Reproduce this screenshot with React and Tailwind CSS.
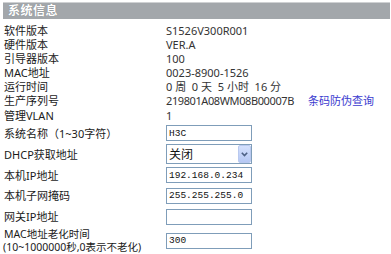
import React from 'react';

const info = [
  { label: '软件版本', value: 'S1526V300R001', h: 'h-[14px]' },
  { label: '硬件版本', value: 'VER.A', h: 'h-[14px]' },
  { label: '引导器版本', value: '100', h: 'h-[14px]' },
  { label: 'MAC地址', value: '0023-8900-1526', h: 'h-[14px]' },
  { label: '运行时间', value: '0 周  0 天  5 小时  16 分', h: 'h-[14px]' },
];

function TextBox({ value }) {
  return (
    <input
      type="text"
      defaultValue={value}
      className="w-[86px] h-[16px] border border-[#7f9db9] bg-white px-[2px] text-[9.5px] text-[#111] outline-none font-['Liberation_Mono','Noto_Sans_CJK_SC',monospace]"
    />
  );
}

function Row({ label, h, children }) {
  return (
    <div className={`flex items-center ${h}`}>
      <div className="w-[166px] shrink-0 pl-[4px] text-[#1a1a1a]">{label}</div>
      <div className="flex items-center text-[#333]">{children}</div>
    </div>
  );
}

export default function App() {
  return (
    <div className="w-[391px] h-[254px] bg-white overflow-hidden text-[11px] leading-none font-['Noto_Sans','Noto_Sans_CJK_SC',sans-serif]">
      <div className="ml-[3px] mt-[2px] w-[387px] h-[17px] bg-[#a3a7ab] border-t border-[#cfd1d3] flex items-center pl-[5px]">
        <span className="text-white font-bold text-[12px] tracking-[0.5px] [text-shadow:0_0_1px_#7d8185]">系统信息</span>
      </div>

      <div className="pt-[4px]">
        {info.map((r) => (
          <Row key={r.label} label={r.label} h={r.h}>
            <span className="whitespace-pre">{r.value}</span>
          </Row>
        ))}
        <Row label="生产序列号" h="h-[15px]">
          <span className="w-[142px] shrink-0 whitespace-nowrap tracking-[-0.4px]">219801A08WM08B00007B</span>
          <a href="#" className="text-[#3b3bcf] whitespace-nowrap">条码防伪查询</a>
        </Row>
        <Row label="管理VLAN" h="h-[15px]">
          <span>1</span>
        </Row>
        <Row label="系统名称（1~30字符）" h="h-[20px]">
          <TextBox value="H3C" />
        </Row>
        <Row label="DHCP获取地址" h="h-[22px]">
          <div className="relative w-[86px] h-[20px]">
            <select
              defaultValue="off"
              className="w-full h-full appearance-none border border-[#7f9db9] bg-white pl-[2px] text-[12px] text-[#111] outline-none font-['Noto_Sans_CJK_SC',sans-serif]"
            >
              <option value="off">关闭</option>
              <option value="on">开启</option>
            </select>
            <div className="pointer-events-none absolute right-[1px] top-[1px] bottom-[1px] w-[13px] rounded-[2px] border border-[#b9c9ef] bg-gradient-to-b from-[#d4e0fd] to-[#b6c8f4] flex items-center justify-center">
              <svg width="7" height="5" viewBox="0 0 7 5">
                <path d="M0.8 0.8 L3.5 3.6 L6.2 0.8" fill="none" stroke="#4d6185" strokeWidth="1.6" />
              </svg>
            </div>
          </div>
        </Row>
        <Row label="本机IP地址" h="h-[20px]">
          <TextBox value="192.168.0.234" />
        </Row>
        <Row label="本机子网掩码" h="h-[21px]">
          <TextBox value="255.255.255.0" />
        </Row>
        <Row label="网关IP地址" h="h-[21px]">
          <TextBox value="" />
        </Row>
        <div className="flex items-center h-[27px]">
          <div className="w-[166px] shrink-0 pl-[3px] text-[#1a1a1a] text-[10.5px] leading-[13px]">
            <div className="pl-[1px]">MAC地址老化时间</div>
            <div className="whitespace-nowrap">(10~1000000秒,0表示不老化)</div>
          </div>
          <TextBox value="300" />
        </div>
      </div>
    </div>
  );
}
